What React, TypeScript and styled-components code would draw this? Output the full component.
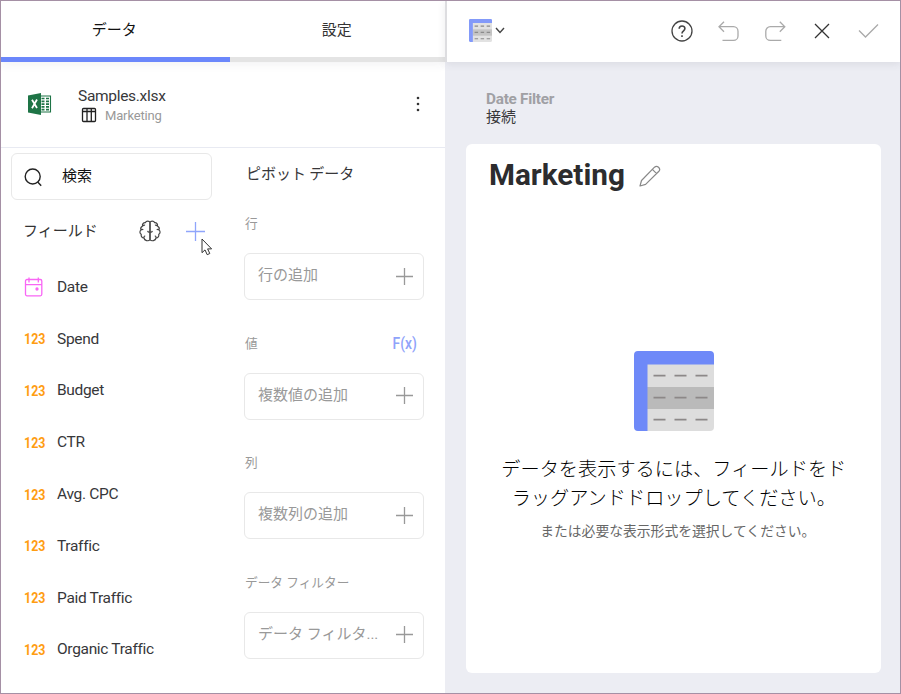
import React from "react";
import styled, { createGlobalStyle } from "styled-components";

const Global = createGlobalStyle`
  *, *::before, *::after { box-sizing: border-box; }
  body {
    margin: 0;
    font-family: Roboto, "Noto Sans CJK JP", sans-serif;
    color: #37373a;
    background: #fff;
  }
  svg { display: block; flex: none; }
`;

const Frame = styled.div`
  width: 901px;
  height: 694px;
  display: flex;
  border: 1px solid #a590a5;
  overflow: hidden;
`;

const DataPanel = styled.section`
  width: 444px;
  flex: none;
  display: flex;
  flex-direction: column;
  background: #fff;
`;

const Tabs = styled.nav`
  height: 61px;
  flex: none;
  display: flex;
  box-shadow: 0 2px 10px rgba(60, 60, 80, 0.07);
`;

const Tab = styled.button<{ $active?: boolean; $width: number }>`
  width: ${(p) => p.$width}px;
  padding: 0 ${(p) => (p.$active ? 2 : 1)}px 0 0;
  border: 0;
  border-bottom: 5px solid ${(p) => (p.$active ? "#6b87fb" : "#e4e4e4")};
  background: none;
  font: 400 15px/20px "Noto Sans CJK JP", sans-serif;
  color: ${(p) => (p.$active ? "#111" : "#333")};
`;

const Source = styled.div`
  height: 86px;
  flex: none;
  display: flex;
  align-items: center;
  padding: 0 20px 2px 25px;
  border-bottom: 1.5px solid #e8eaf2;
`;

const SourceText = styled.div`
  flex: 1;
  margin-left: 26px;
  padding-top: 3px;
`;

const SourceName = styled.div`
  font-size: 15.5px;
  letter-spacing: -0.3px;
  line-height: 20px;
`;

const SheetName = styled.div`
  display: flex;
  align-items: center;
  gap: 8px;
  padding-left: 3px;
  font-size: 13px;
  letter-spacing: -0.15px;
  line-height: 19px;
  color: #999;
`;

const Columns = styled.div`
  flex: 1;
  display: flex;
`;

const FieldColumn = styled.div`
  width: 211px;
  padding: 5px 0 0 10px;
`;

const Search = styled.div`
  height: 47px;
  display: flex;
  align-items: center;
  gap: 19px;
  padding: 0 12px;
  border: 1px solid #e8e8e8;
  border-radius: 6px;
  font-size: 15px;
  line-height: 20px;
  color: #111;

  span { padding-bottom: 2px; }
`;

const FieldsHeader = styled.div`
  height: 61px;
  display: flex;
  align-items: center;
  padding: 1px 5px 0 12px;
  font-size: 15px;
`;

const FieldsTitle = styled.span`
  width: 116px;
  padding-bottom: 4px;
  color: #333;
  white-space: nowrap;
`;

const AddField = styled.div`
  position: relative;
  margin-left: 24px;
`;

const Cursor = styled.svg`
  position: absolute;
  left: 16px;
  top: 17px;
`;

const FieldRow = styled.div`
  height: 51.8px;
  display: flex;
  align-items: center;
  padding-left: 13px;
  font-size: 15.5px;
  letter-spacing: -0.32px;
`;

const FieldType = styled.span`
  width: 33px;
  flex: none;
  padding-top: 1px;
`;

const NumericBadge = styled.span`
  display: inline-block;
  margin-left: -0.5px;
  font-weight: 700;
  font-size: 14.8px;
  letter-spacing: 0;
  color: #ff9d12;
  transform: scaleX(0.84);
  transform-origin: left;
`;

const PivotColumn = styled.div`
  width: 180px;
  margin-left: 32px;
`;

const PivotTitle = styled.h2`
  height: 49px;
  margin: 0;
  padding-left: 2px;
  font: 400 15px/49px "Noto Sans CJK JP", sans-serif;
  white-space: nowrap;
`;

const Slot = styled.div`
  height: 119.5px;
  padding-top: 16px;
`;

const SlotHeader = styled.div`
  height: 40px;
  display: flex;
  justify-content: space-between;
  padding: 0 7px 0 1px;
  font-size: 12.7px;
  line-height: 22px;
  color: #999;
`;

const Formula = styled.span`
  font-size: 16.5px;
  font-weight: 500;
  color: #8fa3fa;
  transform: scaleX(0.84);
  transform-origin: right;
`;

const DropBox = styled.div`
  height: 47px;
  display: flex;
  align-items: center;
  justify-content: space-between;
  padding: 0 9px 1px 13px;
  border: 1px solid #e8e8e8;
  border-radius: 6px;
  font-size: 15px;
  line-height: 20px;
  color: #999;
  white-space: nowrap;

  span { padding-bottom: 2px; }
`;

const PreviewPanel = styled.main`
  flex: 1;
  display: flex;
  flex-direction: column;
  background: #ecedf3;
`;

const Toolbar = styled.header`
  height: 61px;
  flex: none;
  display: flex;
  align-items: center;
  padding: 0 19px 2px 22px;
  border-left: 2px solid #dddde0;
  background: #fff;
  box-shadow: 0 2px 8px rgba(60, 60, 80, 0.1);
`;

const ChartPicker = styled.div`
  display: flex;
  align-items: center;
  gap: 3px;
`;

const Actions = styled.div`
  display: flex;
  align-items: center;
  gap: 22.7px;
  margin-left: auto;
`;

const Breadcrumb = styled.div`
  height: 82px;
  flex: none;
  padding: 28px 0 0 41px;
`;

const CrumbTitle = styled.div`
  font-weight: 700;
  font-size: 15.3px;
  letter-spacing: -0.25px;
  line-height: 18px;
  color: #a0a0a4;
`;

const CrumbText = styled.div`
  font-size: 15px;
  line-height: 18px;
`;

const Card = styled.article`
  width: 415.4px;
  height: 529px;
  margin-left: 20.6px;
  border-radius: 6px;
  background: #fff;
`;

const CardHeader = styled.div`
  height: 63px;
  display: flex;
  align-items: center;
  gap: 14px;
  padding-left: 23.4px;
`;

const CardTitle = styled.h1`
  margin: -1px 0 0;
  font-size: 29.7px;
  line-height: 40px;
  font-weight: 700;
  color: #2c2c2e;
`;

const Empty = styled.div`
  display: flex;
  flex-direction: column;
  align-items: center;
  padding: 144px 0 0 1px;
`;

const EmptyTitle = styled.p`
  margin: 25px 0 0;
  font-size: 19.2px;
  line-height: 28.5px;
  font-weight: 300;
  color: #000;
  text-align: center;
  white-space: nowrap;
`;

const EmptyHint = styled.p`
  margin: 8px 0 0 8px;
  font-size: 13.8px;
  line-height: 20px;
  color: #666;
  white-space: nowrap;
`;

const PivotIcon = ({ size, faded }: { size: number; faded?: boolean }) => (
  <svg width={size} height={size} viewBox="0 0 80 80" opacity={faded ? 0.85 : 1}>
    <path d="M13 13h67v63a4 4 0 0 1-4 4H13z" fill="#ddd" />
    <path d="M13 36h67v22H13z" fill="#bababa" />
    <path d="M4 0h72a4 4 0 0 1 4 4v9.500H13.500V80H4a4 4 0 0 1-4-4V4a4 4 0 0 1 4-4z" fill="#6e89f8" />
    <path
      d="M19.500 24.700h12M40.500 24.700h12M61.500 24.700h12M19.500 46.700h12M40.500 46.700h12M61.500 46.700h12M19.500 68.700h12M40.500 68.700h12M61.500 68.700h12"
      stroke={faded ? "#777" : "#8c8888"}
      strokeWidth={faded ? 4 : 1.8}
    />
  </svg>
);

const ExcelIcon = () => (
  <svg width="26" height="24" viewBox="0 0 26 24">
    <path d="M13 4h11.500v16H13z" fill="#fff" stroke="#1e7446" strokeWidth="1.100" />
    <path d="M15.500 6.500h3M20 6.500h3M15.500 9.300h3M20 9.300h3M15.500 12.100h3M20 12.100h3M15.500 14.900h3M20 14.900h3M15.500 17.700h3M20 17.700h3" stroke="#1e7446" strokeWidth="1.700" />
    <path d="M2 3.500 15 1v22L2 20.500z" fill="#1e7446" />
    <path d="m6 7.700 5 8.300M11 7.500 6 16.200" stroke="#fff" strokeWidth="1.800" />
  </svg>
);

const SheetIcon = () => (
  <svg width="16" height="16" viewBox="0 0 16 16" fill="none" stroke="#222" strokeWidth="1.300">
    <rect x="1.500" y="1.500" width="13" height="13" rx="1" />
    <path d="M1.500 4.500h13M6 1.500v13M10.300 1.500v13" />
  </svg>
);

const MoreIcon = () => (
  <svg width="14" height="18" viewBox="0 0 14 18" fill="#333">
    <circle cx="7" cy="3" r="1.300" />
    <circle cx="7" cy="9" r="1.300" />
    <circle cx="7" cy="15" r="1.300" />
  </svg>
);

const SearchIcon = () => (
  <svg width="19" height="20" viewBox="0 0 19 20" fill="none" stroke="#222" strokeWidth="1.400">
    <circle cx="8.700" cy="9.500" r="7.500" />
    <path d="m13.700 15 3.500 3.700" />
  </svg>
);

const BrainHalf = () => (
  <path d="M11 2.700C10.500 0.600 7.200 0.500 6.300 2.700 4.300 2.600 3 4.200 3.600 6 1.900 7 1.300 8.400 2 9.900 0.500 11.200 0.600 13.400 2.200 14.300 1.900 16.300 3 17.900 4.900 18 5.500 20.700 9.400 21.700 11 19.600M11 2.700v16.900M3.600 6c.8-.8 1.500-1 2.500-.7M2 9.900c.8-.6 1.700-.6 2.300-.2M4.900 18c-.1-1.200.4-1.900 1.300-2.200M11 12.500c-1.500 0-2.300-.6-2.400-1.600" />
);

const BrainIcon = () => (
  <svg width="22" height="22" viewBox="0 0 22 22" fill="none" stroke="#444" strokeWidth="1.200">
    <BrainHalf />
    <g transform="matrix(-1 0 0 1 22 0)"><BrainHalf /></g>
  </svg>
);

const PlusIcon = ({ size, color }: { size: number; color: string }) => (
  <svg width={size} height={size} viewBox={`0 0 ${size} ${size}`} stroke={color} strokeWidth="1.300">
    <path d={`M${size / 2} 1v${size - 2}M1 ${size / 2}h${size - 2}`} />
  </svg>
);

const CalendarIcon = () => (
  <svg width="20" height="20" viewBox="0 0 20 20" fill="none" stroke="#f966f5" strokeWidth="1.300">
    <rect x="1.500" y="2.500" width="16.300" height="16.300" rx="1.500" />
    <path d="M1.500 7.700h16.300M5 .5v5M14.300.5v5" />
    <circle cx="13" cy="12" r="1" fill="#f75df0" />
  </svg>
);

const PencilIcon = () => (
  <svg width="22" height="22" viewBox="0 0 22 22" fill="none" stroke="#888" strokeWidth="1.200" strokeLinejoin="round">
    <path d="M1 21 2.500 15.500 15.500 2.200Q17.500.4 19.500 2.300 21.700 4.300 19.900 6.300L6.600 19.400zM13.400 4.400l4.200 4.200" />
  </svg>
);

const actionIcons: { name: string; color: string; body: React.ReactNode }[] = [
  {
    name: "Help",
    color: "#444",
    body: (
      <>
        <circle cx="12" cy="12" r="10" />
        <path d="M9.200 9.700C9.200 6.200 14.900 6.200 14.900 9.600 14.900 11.900 12 11.700 12 14.500M12 16.300v1.700" strokeWidth="1.600" />
      </>
    ),
  },
  { name: "Undo", color: "#aaa", body: <path d="M7.500 3 2.500 8l5 5M2.500 8H17a4.500 4.500 0 0 1 4.500 4.500v4.700a4.500 4.500 0 0 1-4.500 4.500H6" transform="translate(-.5 -.3)" /> },
  { name: "Redo", color: "#aaa", body: <path d="M16.500 3l5 5-5 5M21.500 8H7a4.500 4.500 0 0 0-4.500 4.500v4.700A4.500 4.500 0 0 0 7 21.700h11" transform="translate(-.7 -.3)" /> },
  { name: "Close", color: "#333", body: <path d="M5 5l14 14M19 5 5 19" /> },
  { name: "Apply", color: "#aaa", body: <path d="M2 11.500 8.500 18 21 5.500" /> },
];

const fields = ["Spend", "Budget", "CTR", "Avg. CPC", "Traffic", "Paid Traffic", "Organic Traffic"];

const slots = [
  { label: "行", hint: "行の追加" },
  { label: "値", hint: "複数値の追加", formula: true },
  { label: "列", hint: "複数列の追加" },
  { label: "データ フィルター", hint: "データ フィルタ..." },
];

export default function App() {
  return (
    <>
      <Global />
      <Frame>
        <DataPanel>
          <Tabs>
            <Tab $active $width={228.5}>データ</Tab>
            <Tab $width={215.5}>設定</Tab>
          </Tabs>
          <Source>
            <ExcelIcon />
            <SourceText>
              <SourceName>Samples.xlsx</SourceName>
              <SheetName><SheetIcon />Marketing</SheetName>
            </SourceText>
            <MoreIcon />
          </Source>
          <Columns>
            <FieldColumn>
              <Search><SearchIcon /><span>検索</span></Search>
              <FieldsHeader>
                <FieldsTitle>フィールド</FieldsTitle>
                <BrainIcon />
                <AddField>
                  <PlusIcon size={21} color="#8fa5fb" />
                  <Cursor width="12" height="18" viewBox="0 0 12 18">
                    <path d="M1 1v13.700l3-2.800 2.200 4.800 2.600-1.200-2.200-4.600h4z" fill="#fff" stroke="#333" />
                  </Cursor>
                </AddField>
              </FieldsHeader>
              <FieldRow><FieldType><CalendarIcon /></FieldType>Date</FieldRow>
              {fields.map((name) => (
                <FieldRow key={name}><FieldType><NumericBadge>123</NumericBadge></FieldType>{name}</FieldRow>
              ))}
            </FieldColumn>
            <PivotColumn>
              <PivotTitle>ピボット データ</PivotTitle>
              {slots.map((slot) => (
                <Slot key={slot.label}>
                  <SlotHeader>{slot.label}{slot.formula && <Formula>F(x)</Formula>}</SlotHeader>
                  <DropBox><span>{slot.hint}</span><PlusIcon size={19} color="#999" /></DropBox>
                </Slot>
              ))}
            </PivotColumn>
          </Columns>
        </DataPanel>
        <PreviewPanel>
          <Toolbar>
            <ChartPicker>
              <PivotIcon size={23} faded />
              <svg width="10" height="7" viewBox="0 0 10 7" fill="none" stroke="#444" strokeWidth="1.400">
                <path d="M1 1l4 4.500L9 1" />
              </svg>
            </ChartPicker>
            <Actions>
              {actionIcons.map((icon) => (
                <svg key={icon.name} aria-label={icon.name} width="24" height="24" viewBox="0 0 24 24" fill="none" stroke={icon.color} strokeWidth="1.300">
                  {icon.body}
                </svg>
              ))}
            </Actions>
          </Toolbar>
          <Breadcrumb>
            <CrumbTitle>Date Filter</CrumbTitle>
            <CrumbText>接続</CrumbText>
          </Breadcrumb>
          <Card>
            <CardHeader><CardTitle>Marketing</CardTitle><PencilIcon /></CardHeader>
            <Empty>
              <PivotIcon size={80} />
              <EmptyTitle>データを表示するには、フィールドをド<br />ラッグアンドドロップしてください。</EmptyTitle>
              <EmptyHint>または必要な表示形式を選択してください。</EmptyHint>
            </Empty>
          </Card>
        </PreviewPanel>
      </Frame>
    </>
  );
}
